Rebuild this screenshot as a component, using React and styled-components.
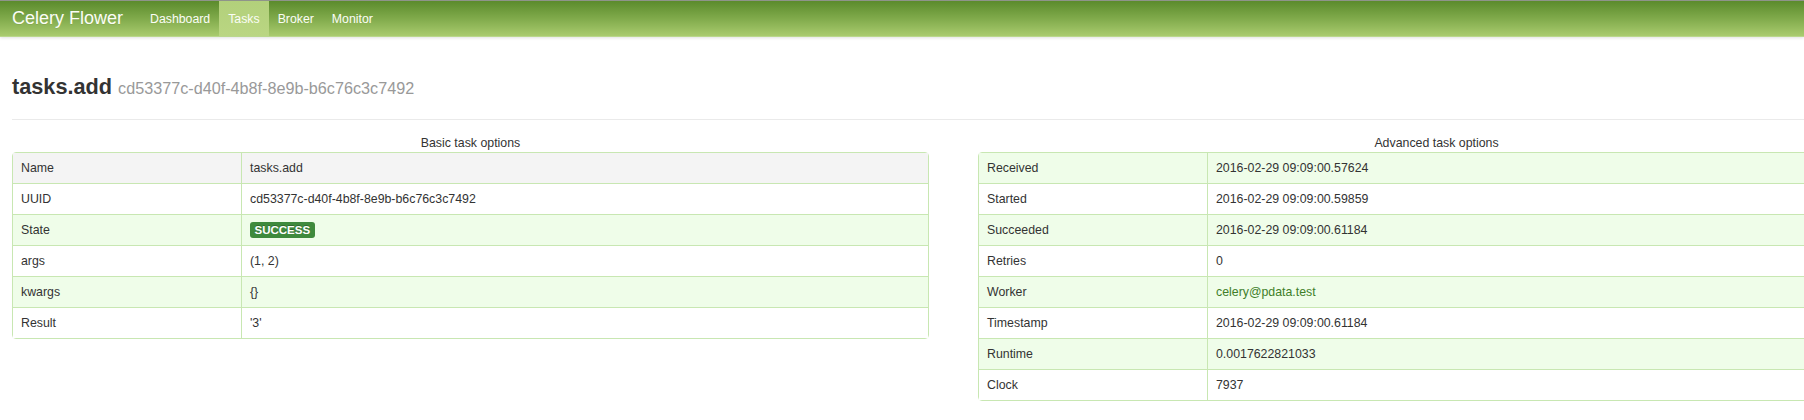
import React from "react";
import styled, { createGlobalStyle } from "styled-components";

const GlobalStyle = createGlobalStyle`
  html, body {
    margin: 0;
    padding: 0;
    overflow: hidden;
    background: #fff;
  }
  body {
    font-family: "Liberation Sans", Arial, Helvetica, sans-serif;
    font-size: 12.35px;
    color: #333;
  }
`;

const Navbar = styled.div`
  display: flex;
  align-items: stretch;
  height: 35px;
  border-top: 1px solid #8f948a;
  border-bottom: 1px solid #b9d78c;
  background: linear-gradient(to bottom, #5b8b2c 0%, #80aa4b 50%, #a9cb6e 100%);
  box-shadow: 0 1px 3px rgba(0, 0, 0, 0.12);
  position: relative;
  z-index: 1;
`;

const Brand = styled.a`
  display: flex;
  align-items: center;
  padding-left: 12px;
  margin-right: 18px;
  font-size: 18px;
  color: #fbfdf6;
  text-decoration: none;
  text-shadow: 0 1px 0 rgba(0, 0, 0, 0.08);
`;

const NavList = styled.ul`
  display: flex;
  list-style: none;
  margin: 0;
  padding: 0;
`;

const NavItem = styled.li`
  display: flex;
  align-items: center;
  padding: 0 9px;
  font-size: 12.3px;
  color: #fbfdf6;
  background: ${(p) => (p.$active ? "linear-gradient(to bottom, #b2d07b, #bad682)" : "transparent")};
`;

const Page = styled.div`
  padding: 0 12px;
`;

const Heading = styled.h2`
  margin: 35px 0 0;
  font-size: 21.7px;
  line-height: 30px;
  font-weight: bold;
  color: #333;
`;

const Sub = styled.small`
  font-size: 16.2px;
  font-weight: normal;
  color: #999;
`;

const Divider = styled.hr`
  margin: 16px 0 15px;
  border: 0;
  border-top: 1px solid #eaeaea;
  width: 1792px;
`;

const Columns = styled.div`
  display: grid;
  grid-template-columns: 917px 917px;
  column-gap: 49px;
  align-items: start;
`;

const Caption = styled.div`
  text-align: center;
  line-height: 17px;
  color: #333;
`;

const Table = styled.table`
  width: 917px;
  table-layout: fixed;
  border-collapse: separate;
  border-spacing: 0;
  border: 1px solid #c8e7b2;
  border-radius: 4px;
  font-size: 12.35px;
`;

const Row = styled.tr`
  background: ${(p) => (p.$hover ? "#f4f4f4" : p.$striped ? "#effde9" : "#fff")};
  &:first-child td {
    border-top: 0;
  }
`;

const Cell = styled.td`
  box-sizing: border-box;
  height: 31px;
  padding: 0 8px;
  vertical-align: middle;
  border-top: 1px solid #c8e7b2;
  border-left: 1px solid #c8e7b2;
  color: #333;
  white-space: nowrap;
  &:first-child {
    width: 228px;
    border-left: 0;
  }
  tr:first-child > & {
    height: 30px;
  }
`;

const Link = styled.a`
  color: #3f7f2a;
  text-decoration: none;
`;

const Badge = styled.span`
  display: inline-block;
  padding: 1px 4.5px;
  font-size: 11.5px;
  line-height: 14px;
  font-weight: bold;
  color: #fff;
  background: #3f8a3d;
  border-radius: 3px;
  text-shadow: 0 -1px 0 rgba(0, 0, 0, 0.25);
`;

const basic = [
  ["Name", "tasks.add"],
  ["UUID", "cd53377c-d40f-4b8f-8e9b-b6c76c3c7492"],
  ["State", <Badge>SUCCESS</Badge>],
  ["args", "(1, 2)"],
  ["kwargs", "{}"],
  ["Result", "'3'"],
];

const advanced = [
  ["Received", "2016-02-29 09:09:00.57624"],
  ["Started", "2016-02-29 09:09:00.59859"],
  ["Succeeded", "2016-02-29 09:09:00.61184"],
  ["Retries", "0"],
  ["Worker", <Link href="#">celery@pdata.test</Link>],
  ["Timestamp", "2016-02-29 09:09:00.61184"],
  ["Runtime", "0.0017622821033"],
  ["Clock", "7937"],
];

const OptionsTable = ({ title, rows, hoverFirst }) => (
  <div>
    <Caption>{title}</Caption>
    <Table>
      <tbody>
        {rows.map(([k, v], i) => (
          <Row key={k} $striped={i % 2 === 0} $hover={hoverFirst && i === 0}>
            <Cell>{k}</Cell>
            <Cell>{v}</Cell>
          </Row>
        ))}
      </tbody>
    </Table>
  </div>
);

export default function App() {
  return (
    <>
      <GlobalStyle />
      <Navbar>
        <Brand href="#">Celery Flower</Brand>
        <NavList>
          <NavItem>Dashboard</NavItem>
          <NavItem $active>Tasks</NavItem>
          <NavItem>Broker</NavItem>
          <NavItem>Monitor</NavItem>
        </NavList>
      </Navbar>
      <Page>
        <Heading>
          tasks.add <Sub>cd53377c-d40f-4b8f-8e9b-b6c76c3c7492</Sub>
        </Heading>
        <Divider />
        <Columns>
          <OptionsTable title="Basic task options" rows={basic} hoverFirst />
          <OptionsTable title="Advanced task options" rows={advanced} />
        </Columns>
      </Page>
    </>
  );
}
